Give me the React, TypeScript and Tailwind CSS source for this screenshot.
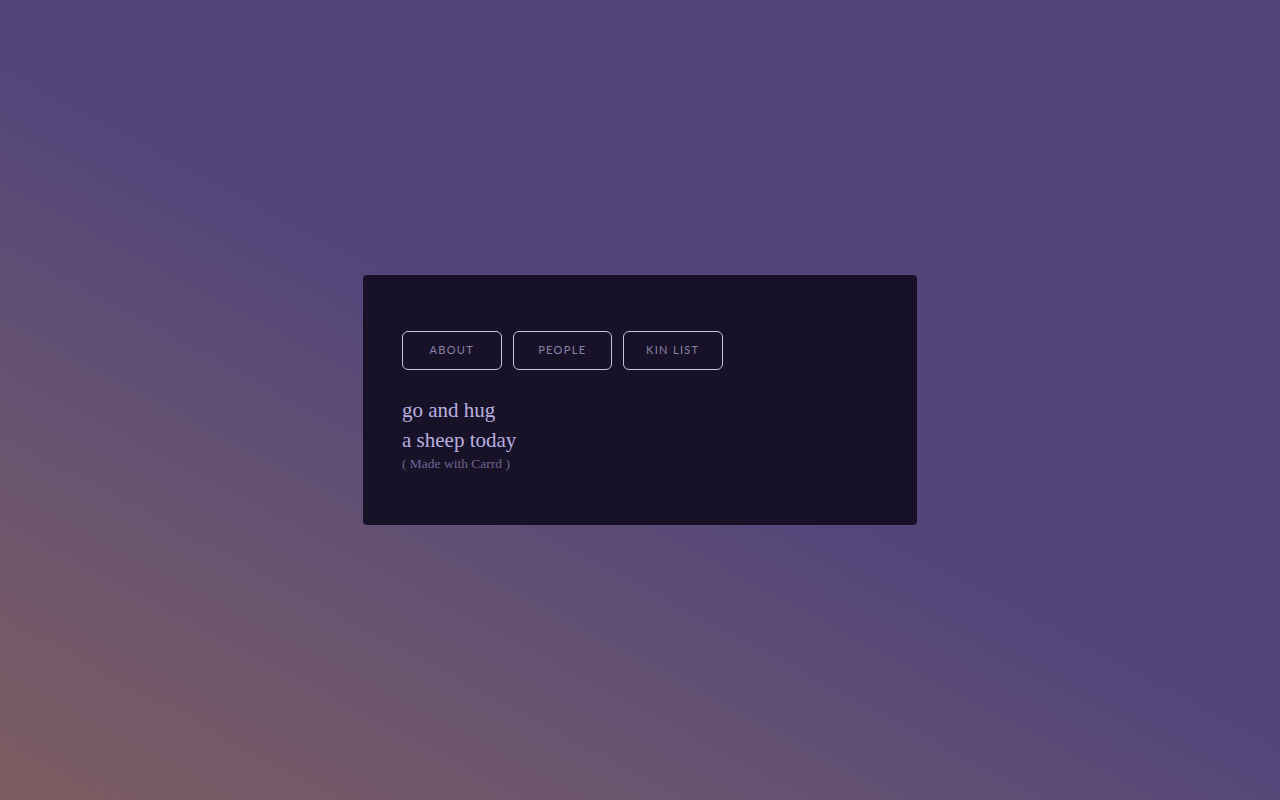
import React from 'react';

const links = ['ABOUT', 'PEOPLE', 'KIN LIST'];

export default function App() {
  return (
    <div className="min-h-screen w-full flex items-center justify-center bg-[linear-gradient(28deg,#7d5c60_0%,#6a5570_24%,#52457a_50%,#52457a_100%)]">
      <div className="w-[554px] h-[250px] rounded-[4px] bg-[#181229] px-[39px] pt-[56px]">
        <div className="flex gap-[11px]">
          {links.map((l) => (
            <a
              key={l}
              href="#"
              className="w-[99.5px] h-[39px] flex items-center justify-center rounded-[6px] border border-[#c9c1e3] text-[11px] tracking-[0.12em] text-[#8a82a6] font-['Lato',sans-serif]"
            >
              {l}
            </a>
          ))}
        </div>
        <div className="mt-[25px] font-['Liberation_Serif',serif] text-[#b9b0e0] text-[21px] leading-[30px]">
          <p>go and hug</p>
          <p>a sheep today</p>
        </div>
        <p className="font-['Liberation_Serif',serif] text-[13.5px] leading-[18px] text-[#6e6590]">( Made with Carrd )</p>
      </div>
    </div>
  );
}
